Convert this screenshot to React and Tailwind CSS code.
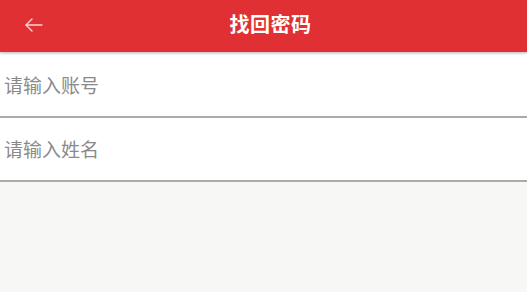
export default function App() {
  return (
    <div className="w-[527px] h-[292px] bg-[#f7f8f6] flex flex-col" style={{ fontFamily: '"Noto Sans CJK SC", "Noto Sans", sans-serif' }}>
      <div className="h-[52px] bg-[#e03033] flex items-center relative shadow-[0_1px_3px_rgba(0,0,0,0.25)] z-10">
        <svg className="absolute left-[24px] top-[17px]" width="19" height="16" viewBox="0 0 19 16" fill="none" stroke="#f6d3d3" strokeWidth="1.4" strokeLinecap="round" strokeLinejoin="round">
          <path d="M18 8H2" />
          <path d="M8 2L2 8l6 6" />
        </svg>
        <div className="flex-1 text-center pl-[14px] pb-[4px] text-white text-[20px] font-bold tracking-[0.5px] leading-none">找回密码</div>
      </div>
      <div className="h-[64px] bg-white border-b-2 border-[#aaaaaa] flex items-center pl-[4px] mt-[2px]">
        <span className="text-[19px] text-[#8a8a8a]">请输入账号</span>
      </div>
      <div className="h-[64px] bg-white border-b-2 border-[#aaaaaa] flex items-center pl-[4px]">
        <span className="text-[19px] text-[#8a8a8a]">请输入姓名</span>
      </div>
    </div>
  );
}
